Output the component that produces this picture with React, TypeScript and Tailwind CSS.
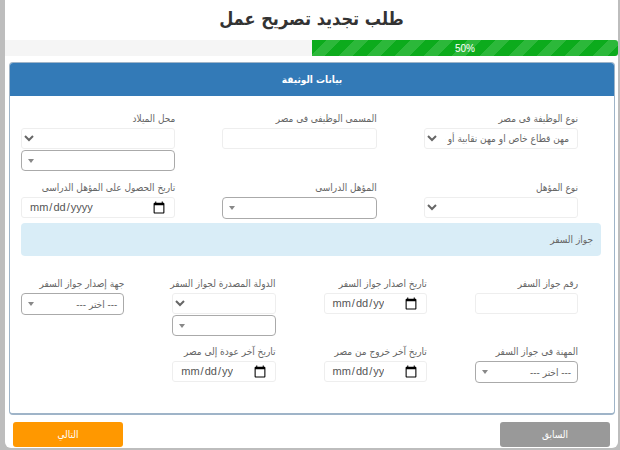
const font = "font-['DejaVu_Sans_Condensed','Liberation_Sans',Arial,sans-serif]";

function Label({ children }: { children: string }) {
  return <label className="block h-[17px] text-right text-[10px] leading-[15px] text-[#666] whitespace-nowrap">{children}</label>;
}

function TextInput() {
  return <input type="text" className="block h-[21px] w-full rounded-[3px] border border-[#eeeeee] bg-white" />;
}

function NativeSelect({ text = "" }: { text?: string }) {
  return (
    <select dir="rtl" className="block h-[21px] w-full rounded-[3px] border border-[#eeeeee] bg-white px-1 text-[10px] text-[#666]">
      <option>{text}</option>
    </select>
  );
}

function Select2({ text = "", stacked = false }: { text?: string; stacked?: boolean }) {
  return (
    <div dir="ltr" className={stacked ? "mt-px flex h-[21px] w-full items-center justify-between rounded-[4px] border border-[#aaaaaa] bg-white pl-[6px] pr-[6px]" : "flex h-[22px] w-full items-center justify-between rounded-[4px] border border-[#aaaaaa] bg-white pl-[6px] pr-[6px]"}>
      <span className="h-0 w-0 border-x-[3px] border-t-[4px] border-x-transparent border-t-[#888888]" />
      <span dir="rtl" className="text-[10px] text-[#666]">{text}</span>
    </div>
  );
}

function DateInput() {
  return (
    <input
      type="date"
      dir="ltr"
      className="block h-[21px] w-full rounded-[3px] border border-[#eeeeee] bg-white pl-[7px] pr-[8px] font-['Liberation_Sans',Arial,sans-serif] text-[11px] text-[#555] [&::-webkit-calendar-picker-indicator]:ml-[20px] [&::-webkit-calendar-picker-indicator]:h-[14px] [&::-webkit-calendar-picker-indicator]:w-[14px] [&::-webkit-calendar-picker-indicator]:p-0"
    />
  );
}

function Field({ label, children }: { label: string; children: React.ReactNode }) {
  return (
    <div>
      <Label>{label}</Label>
      {children}
    </div>
  );
}

export default function App() {
  return (
    <div dir="rtl" className={`${font} h-[450px] w-[620px] overflow-hidden bg-[#bdbdbd] pl-[5px] pr-[2px]`}>
      <div className="flex h-[448px] flex-col rounded-b-[6px] bg-white">
        <h1 className="h-[40px] text-center text-[18px] font-bold leading-[37px] text-[#333]">طلب تجديد تصريح عمل</h1>
        <div dir="ltr" className="flex h-[16px] bg-[#f5f5f5]">
          <div className="w-[307px]" />
          <div className="flex flex-1 items-center justify-center rounded-r-[3px] bg-[#0cab1c] bg-[repeating-linear-gradient(135deg,#0cab1c_0,#0cab1c_10px,#2cb83a_10px,#2cb83a_20px)] font-['Liberation_Sans',Arial,sans-serif] text-[10px] text-white">50%</div>
        </div>
        <section className="ml-[4px] mr-[3px] mt-[6px] h-[353px] overflow-hidden rounded-[4px] border border-b-2 border-[#9fb4c8]">
          <header className="flex h-[33px] items-center justify-center bg-[#337ab7] text-[10px] font-bold text-white">بيانات الوثيقة</header>
          <div className="pl-[11px] pr-[13px] pt-[15px]">
            <div className="grid grid-cols-3 gap-x-[47px] pr-[23px]">
              <Field label="نوع الوظيفة فى مصر"><NativeSelect text="مهن قطاع خاص او مهن نقابية أو غيرها" /></Field>
              <Field label="المسمى الوظيفى فى مصر"><TextInput /></Field>
              <Field label="محل الميلاد">
                <NativeSelect />
                <Select2 stacked />
              </Field>
            </div>
            <div className="mt-[9px] grid grid-cols-3 gap-x-[47px] pr-[23px]">
              <Field label="نوع المؤهل"><NativeSelect /></Field>
              <Field label="المؤهل الدراسى"><Select2 /></Field>
              <Field label="تاريخ الحصول على المؤهل الدراسى"><DateInput /></Field>
            </div>
            <div className="mt-[4px] flex h-[33px] items-center rounded-[4px] bg-[#d9edf7] pr-[8px] text-[10px] text-[#666]">جواز السفر</div>
            <div className="mt-[20px] grid grid-cols-4 gap-x-[48px] pr-[23px]">
              <Field label="رقم جواز السفر"><TextInput /></Field>
              <Field label="تاريخ اصدار جواز السفر"><DateInput /></Field>
              <Field label="الدولة المصدرة لجواز السفر">
                <NativeSelect />
                <Select2 stacked />
              </Field>
              <Field label="جهة إصدار جواز السفر"><Select2 text="--- اختر ---" /></Field>
            </div>
            <div className="mt-[8px] grid grid-cols-4 gap-x-[48px] pr-[23px]">
              <Field label="المهنة فى جواز السفر"><Select2 text="--- اختر ---" /></Field>
              <Field label="تاريخ آخر خروج من مصر"><DateInput /></Field>
              <Field label="تاريخ آخر عودة إلى مصر"><DateInput /></Field>
            </div>
          </div>
        </section>
        <footer className="mt-[7px] flex justify-between px-[8px]">
          <button className="h-[25px] w-[110px] rounded-[3px] bg-[#999999] text-[10px] text-white">السابق</button>
          <button className="h-[25px] w-[110px] rounded-[3px] bg-[#ff9800] text-[10px] text-white">التالي</button>
        </footer>
      </div>
    </div>
  );
}
